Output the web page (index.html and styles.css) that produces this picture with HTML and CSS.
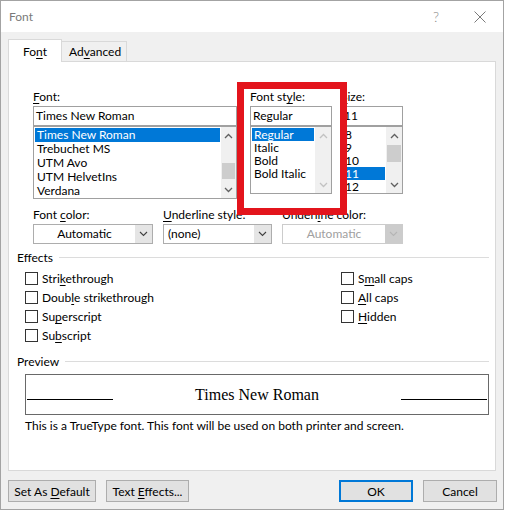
FILE: index.html
```html
<!DOCTYPE html>
<html>
<head>
<meta charset="utf-8">
<title>Font</title>
<link rel="stylesheet" href="styles.css">
</head>
<body>
<div class="window">
  <div class="titlebar">
    <span class="title">Font</span>
    <span class="help">?</span>
    <span class="close"><svg width="12" height="12" viewBox="0 0 12 12"><path d="M0.5 0.5L11.5 11.5M11.5 0.5L0.5 11.5" stroke="#7a7a7a" stroke-width="1" fill="none"/></svg></span>
  </div>
  <div class="content">
    <div class="tabs">
      <div class="tab active"><span>Fo<u>n</u>t</span></div>
      <div class="tab"><span>Ad<u>v</u>anced</span></div>
    </div>
    <div class="panel">
      <div class="selectors">
        <div class="col col-font">
          <div class="label"><u>F</u>ont:</div>
          <div class="input">Times New Roman</div>
          <div class="list list-font">
            <div class="items">
              <div class="item sel">Times New Roman</div>
              <div class="item">Trebuchet MS</div>
              <div class="item">UTM Avo</div>
              <div class="item">UTM HelvetIns</div>
              <div class="item">Verdana</div>
            </div>
            <div class="scrollbar sb-font">
              <div class="arrow"><svg width="9" height="6" viewBox="0 0 9 6"><path d="M1 5L4.5 1.5L8 5" stroke="#606060" stroke-width="1.3" fill="none"/></svg></div>
              <div class="track"><div class="thumb thumb-font"></div></div>
              <div class="arrow"><svg width="9" height="6" viewBox="0 0 9 6"><path d="M1 1L4.5 4.5L8 1" stroke="#606060" stroke-width="1.3" fill="none"/></svg></div>
            </div>
          </div>
        </div>
        <div class="col col-style">
          <div class="label">Font st<u>y</u>le:</div>
          <div class="input">Regular</div>
          <div class="list list-short">
            <div class="items">
              <div class="item sel">Regular</div>
              <div class="item">Italic</div>
              <div class="item">Bold</div>
              <div class="item">Bold Italic</div>
            </div>
            <div class="scrollbar sb-wide">
              <div class="arrow"><svg width="9" height="6" viewBox="0 0 9 6"><path d="M1 5L4.5 1.5L8 5" stroke="#c2c2c2" stroke-width="1.3" fill="none"/></svg></div>
              <div class="track"></div>
              <div class="arrow"><svg width="9" height="6" viewBox="0 0 9 6"><path d="M1 1L4.5 4.5L8 1" stroke="#c2c2c2" stroke-width="1.3" fill="none"/></svg></div>
            </div>
          </div>
        </div>
        <div class="col col-size">
          <div class="label"><u>S</u>ize:</div>
          <div class="input">11</div>
          <div class="list list-short">
            <div class="items">
              <div class="item">8</div>
              <div class="item">9</div>
              <div class="item">10</div>
              <div class="item sel">11</div>
              <div class="item">12</div>
            </div>
            <div class="scrollbar sb-wide">
              <div class="arrow"><svg width="9" height="6" viewBox="0 0 9 6"><path d="M1 5L4.5 1.5L8 5" stroke="#606060" stroke-width="1.3" fill="none"/></svg></div>
              <div class="track"><div class="thumb thumb-size"></div></div>
              <div class="arrow"><svg width="9" height="6" viewBox="0 0 9 6"><path d="M1 1L4.5 4.5L8 1" stroke="#606060" stroke-width="1.3" fill="none"/></svg></div>
            </div>
          </div>
        </div>
      </div>

      <div class="dropdowns">
        <div class="dd-group dd-color">
          <div class="label">Font <u>c</u>olor:</div>
          <div class="dropdown">
            <div class="dd-text center">Automatic</div>
            <div class="dd-btn"><svg width="9" height="6" viewBox="0 0 9 6"><path d="M1 1L4.5 4.5L8 1" stroke="#404040" stroke-width="1.1" fill="none"/></svg></div>
          </div>
        </div>
        <div class="dd-group dd-uline">
          <div class="label"><u>U</u>nderline style:</div>
          <div class="dropdown">
            <div class="dd-text">(none)</div>
            <div class="dd-btn"><svg width="9" height="6" viewBox="0 0 9 6"><path d="M1 1L4.5 4.5L8 1" stroke="#404040" stroke-width="1.1" fill="none"/></svg></div>
          </div>
        </div>
        <div class="dd-group dd-ucolor">
          <div class="label">Underl<u>i</u>ne color:</div>
          <div class="dropdown disabled">
            <div class="dd-text center">Automatic</div>
            <div class="dd-btn"><svg width="9" height="6" viewBox="0 0 9 6"><path d="M1 1L4.5 4.5L8 1" stroke="#b5b5b5" stroke-width="1.1" fill="none"/></svg></div>
          </div>
        </div>
      </div>

      <div class="group-label effects-label">Effects</div>
      <div class="effects">
        <div class="eff-col eff-left">
          <div class="check"><span class="box"></span><span>Stri<u>k</u>ethrough</span></div>
          <div class="check"><span class="box"></span><span>Doub<u>l</u>e strikethrough</span></div>
          <div class="check"><span class="box"></span><span>Su<u>p</u>erscript</span></div>
          <div class="check"><span class="box"></span><span>Su<u>b</u>script</span></div>
        </div>
        <div class="eff-col">
          <div class="check"><span class="box"></span><span>S<u>m</u>all caps</span></div>
          <div class="check"><span class="box"></span><span><u>A</u>ll caps</span></div>
          <div class="check"><span class="box"></span><span><u>H</u>idden</span></div>
        </div>
      </div>

      <div class="group-label preview-label">Preview</div>
      <div class="preview">
        <span class="pline"></span>
        <span class="ptext">Times New Roman</span>
        <span class="pline"></span>
      </div>
      <div class="desc">This is a TrueType font. This font will be used on both printer and screen.</div>
    </div>

    <div class="buttons">
      <div class="btn btn-default"><span>Set As <u>D</u>efault</span></div>
      <div class="btn btn-effects"><span>Text <u>E</u>ffects...</span></div>
      <div class="btn btn-ok"><span>OK</span></div>
      <div class="btn btn-cancel"><span>Cancel</span></div>
    </div>
  </div>
  <div class="highlight"></div>
</div>
</body>
</html>
```

FILE: styles.css
```css
* { box-sizing: border-box; }

body {
  margin: 0;
  background: #ffffff;
  font-family: Lato, "Noto Sans", sans-serif;
  font-size: 12px;
  color: #000;
}

u { text-decoration: underline; text-underline-offset: 2px; }

.window {
  position: relative;
  width: 504px;
  height: 510px;
  border: 1px solid #a3a3a3;
  background: #f0f0f0;
}

.titlebar {
  height: 31px;
  background: #ffffff;
  display: flex;
  align-items: center;
  padding-left: 8px;
}

.title { color: #7a7a7a; font-size: 12px; }

.help {
  margin-left: auto;
  width: 10px;
  text-align: center;
  color: #8a8a8a;
  font-size: 14px;
  font-weight: 300;
}

.close {
  display: flex;
  margin-left: 33px;
  margin-right: 17px;
}

.content {
  padding: 7px 6px 0 7px;
}

.tabs {
  display: flex;
  align-items: flex-end;
  height: 22px;
  position: relative;
  z-index: 1;
}

.tab {
  height: 20px;
  line-height: 20px;
  border: 1px solid #d9d9d9;
  border-bottom: none;
  background: #f0f0f0;
  width: 65px;
  padding-left: 7px;
  border-left: none;
}

.tab.active {
  height: 23px;
  margin-bottom: -1px;
  line-height: 24px;
  background: #ffffff;
  width: 54px;
  padding-left: 14px;
  border-left: 1px solid #d9d9d9;
}

.panel {
  width: 488px;
  height: 410px;
  border: 1px solid #d9d9d9;
  background: #ffffff;
}

.label {
  height: 17px;
  line-height: 16px;
  white-space: nowrap;
}

.selectors {
  display: flex;
  margin-top: 27px;
  padding-left: 24px;
}

.col-font { width: 204px; }
.col-style { width: 82px; margin-left: 13px; }
.col-size { width: 62px; margin-left: 9px; }

.input {
  height: 20px;
  border: 1px solid #a0a0a0;
  padding-left: 2px;
  line-height: 18px;
  background: #fff;
}

.list {
  display: flex;
  border: 1px solid #a0a0a0;
  background: #fff;
}

.list-font { height: 73px; }
.list-short { height: 68px; }

.items {
  flex: 1;
  padding: 1px 1px 0 1px;
  overflow: hidden;
}

.item {
  height: 13px;
  line-height: 13px;
  padding-left: 2px;
  white-space: nowrap;
}

.list-font .item { height: 14px; line-height: 14px; }

.item.sel { background: #0078d7; color: #fff; }

.scrollbar {
  display: flex;
  flex-direction: column;
  width: 15px;
  background: #f0f0f0;
}

.sb-wide { width: 16px; }

.arrow {
  height: 17px;
  display: flex;
  align-items: center;
  justify-content: center;
}

.track { flex: 1; padding: 0 1px; }

.thumb { background: #cdcdcd; }
.thumb-font { margin-top: 19px; height: 16px; }
.thumb-size { margin-top: 1px; height: 17px; }

.dropdowns {
  display: flex;
  margin-top: 8px;
  padding-left: 24px;
}

.dd-color { width: 120px; }
.dd-uline { width: 109px; margin-left: 10px; }
.dd-ucolor { width: 121px; margin-left: 10px; }

.dropdown {
  display: flex;
  height: 20px;
  border: 1px solid #adadad;
  background: #fff;
}

.dd-text {
  flex: 1;
  line-height: 18px;
  padding-left: 4px;
  white-space: nowrap;
}

.dd-text.center { text-align: center; padding-left: 0; }

.dd-btn {
  width: 17px;
  background: #e5e5e5;
  display: flex;
  align-items: center;
  justify-content: center;
}

.dropdown.disabled { border-color: #cccccc; }
.dropdown.disabled .dd-text { color: #a0a0a0; }
.dropdown.disabled .dd-btn { background: #cccccc; }

.group-label {
  display: flex;
  align-items: center;
  height: 16px;
  padding-left: 8px;
  margin-right: 6px;
}

.group-label::after {
  content: "";
  flex: 1;
  height: 1px;
  background: #dcdcdc;
  margin-left: 6px;
}

.effects-label { margin-top: 5px; }

.effects {
  display: flex;
  margin-top: 4px;
  padding-left: 16px;
}

.eff-left { width: 316px; }

.check {
  height: 19px;
  display: flex;
  align-items: center;
}

.box {
  width: 13px;
  height: 13px;
  border: 1px solid #333333;
  background: #fff;
  margin-right: 4px;
}

.preview-label { margin-top: 8px; }

.preview {
  margin-top: 5px;
  margin-left: 16px;
  width: 464px;
  height: 41px;
  border: 1px solid #696969;
  display: flex;
  align-items: center;
  justify-content: space-between;
  padding: 0 1px;
}

.pline {
  width: 86px;
  height: 1px;
  background: #000;
  margin-top: 10px;
}

.ptext {
  font-family: "Liberation Serif", "Times New Roman", serif;
  font-size: 16px;
  line-height: 1;
}

.desc {
  margin-top: 3px;
  padding-left: 16px;
  line-height: 16px;
}

.buttons {
  display: flex;
  margin-top: 9px;
}

.btn {
  height: 22px;
  border: 1px solid #adadad;
  background: #e1e1e1;
  display: flex;
  align-items: center;
  justify-content: center;
  white-space: nowrap;
}

.btn-default { width: 88px; }
.btn-effects { width: 83px; margin-left: 10px; }
.btn-ok { width: 74px; margin-left: auto; border: 2px solid #0078d7; }
.btn-cancel { width: 74px; margin-left: 10px; }

.highlight {
  position: absolute;
  left: 236px;
  top: 81px;
  width: 110px;
  height: 133px;
  border: 7px solid #e3141c;
}
```
